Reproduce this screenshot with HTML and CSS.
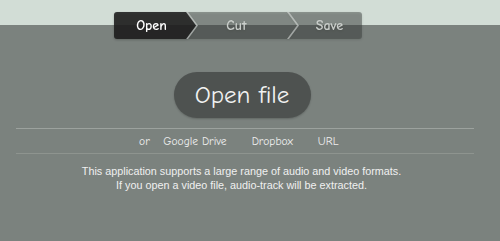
FILE: index.html
```html
<!DOCTYPE html>
<html lang="en">
<head>
    <meta charset="UTF-8">
    <meta name="viewport" content="width=device-width, initial-scale=1.0">
    <title>Audio Cutter</title>
    <link rel="stylesheet" href="styles.css">
</head>
<body>
    <div class="page">
        <div class="steps">
            <div class="step step-open active">Open</div>
            <div class="step step-cut">Cut</div>
            <div class="step step-save">Save</div>
        </div>

        <div class="open-area">
            <button class="open-btn">Open file</button>
        </div>

        <div class="sources">
            <span class="or">or</span>
            <a href="#">Google Drive</a>
            <a href="#">Dropbox</a>
            <a href="#">URL</a>
        </div>

        <div class="info">
            <p>This application supports a large range of audio and video formats.</p>
            <p>If you open a video file, audio-track will be extracted.</p>
        </div>
    </div>
</body>
</html>
```

FILE: styles.css
```css
body {
    margin: 0;
    background: linear-gradient(to bottom, #d2ddd6 0, #d2ddd6 25px, #7b827e 25px);
    font-family: "Comic Sans MS", "Comic Neue", "Open Sans", sans-serif;
    color: #eeeeee;
    height: 241px;
    overflow: hidden;
}
.page {
    width: 483px;
}
.steps {
    display: flex;
    margin: 12px 0 0 114px;
    width: 248px;
    height: 27px;
    filter: drop-shadow(0 1px 1px rgba(0, 0, 0, 0.25));
}
.step {
    position: relative;
    display: flex;
    align-items: center;
    justify-content: center;
    font-size: 14px;
    font-weight: bold;
    color: #c9cdca;
    height: 27px;
}
.step::before {
    content: "";
    position: absolute;
    inset: 0;
    z-index: -1;
    background: rgba(55, 60, 58, 0.45);
}
.step-open {
    width: 82px;
    padding-right: 7px;
    box-sizing: border-box;
    color: #ffffff;
    z-index: 2;
}
.step-open::before {
    background: rgba(28, 28, 28, 0.88);
    border-radius: 3px 0 0 3px;
    clip-path: polygon(0 0, 72px 0, 82px 50%, 72px 100%, 0 100%);
}
.step-cut {
    width: 111px;
    margin-left: -10px;
    padding-right: 10px;
    box-sizing: border-box;
}
.step-cut::before {
    clip-path: polygon(0 0, 101px 0, 111px 50%, 101px 100%, 0 100%, 10px 50%);
}
.step-save {
    width: 75px;
    margin-left: -10px;
    padding-left: 10px;
    box-sizing: border-box;
}
.step-save::before {
    border-radius: 0 3px 3px 0;
    clip-path: polygon(0 0, 100% 0, 100% 100%, 0 100%, 10px 50%);
}
.step-cut::after,
.step-save::after {
    content: "";
    position: absolute;
    left: 0;
    top: 0;
    width: 12px;
    height: 27px;
    background: rgba(225, 230, 227, 0.55);
    clip-path: polygon(0 0, 2px 0, 12px 50%, 2px 100%, 0 100%, 10px 50%);
}
.open-area {
    display: flex;
    justify-content: center;
    margin-top: 33px;
}
.open-btn {
    width: 137px;
    height: 46px;
    border: none;
    border-radius: 23px;
    background: #4e5250;
    color: #f2f2f2;
    font-family: inherit;
    font-size: 25px;
    padding: 0 0 2px;
    box-shadow: 0 1px 2px rgba(0, 0, 0, 0.2);
    margin-left: 1px;
}
.sources {
    display: flex;
    justify-content: center;
    align-items: center;
    margin: 10px 0 0 16px;
    width: 458px;
    height: 26px;
    font-size: 11.5px;
    border-top: 1px solid #9ca29e;
    border-bottom: 1px solid #8e948f;
    box-sizing: border-box;
}
.sources .or {
    margin-right: 1px;
}
.sources a {
    color: #eeeeee;
    text-decoration: none;
    margin: 0 12.5px;
}
.info {
    margin-top: 10px;
    text-align: center;
    font-family: "Liberation Sans", Arial, sans-serif;
    font-size: 10.8px;
    line-height: 14px;
    color: #f0f0f0;
}
.info p {
    margin: 0;
}
```
